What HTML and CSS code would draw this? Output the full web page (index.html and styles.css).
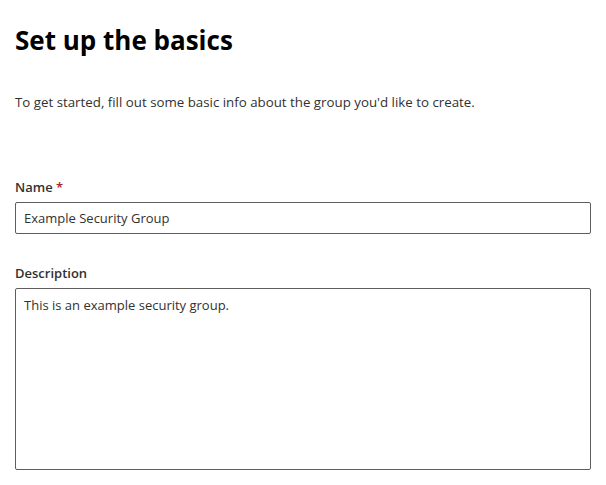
FILE: index.html
```html
<!DOCTYPE html>
<html lang="en">
<head>
    <meta charset="UTF-8">
    <meta name="viewport" content="width=device-width, initial-scale=1.0">
    <title>Set up the basics</title>
    <link rel="stylesheet" href="styles.css">
</head>
<body>
    <div class="page">
        <h1 class="title">Set up the basics</h1>
        <p class="intro">To get started, fill out some basic info about the group you'd like to create.</p>

        <div class="field">
            <label class="label" for="name">Name <span class="required">*</span></label>
            <input class="text-input" id="name" type="text" value="Example Security Group">
        </div>

        <div class="field">
            <label class="label" for="description">Description</label>
            <textarea class="text-area" id="description">This is an example security group.</textarea>
        </div>
    </div>
</body>
</html>
```

FILE: styles.css
```css
body {
    margin: 0;
    background: #ffffff;
    font-family: "Open Sans", "Noto Sans", sans-serif;
    color: #323130;
}
.page {
    padding: 22px 15px 0 15px;
}
.title {
    margin: 0;
    font-size: 26px;
    font-weight: 700;
    line-height: 36px;
    color: #000000;
}
.intro {
    margin: 34px 0 0 0;
    font-size: 13.3px;
    line-height: 20px;
}
.field {
    margin-top: 65px;
}
.field + .field {
    margin-top: 29px;
}
.label {
    display: block;
    font-size: 13px;
    font-weight: 600;
    line-height: 20px;
    padding-bottom: 5px;
}
.required {
    color: #a4262c;
}
.text-input,
.text-area {
    display: block;
    box-sizing: border-box;
    width: 576px;
    margin: 0;
    border: 1px solid #605e5c;
    border-radius: 2px;
    padding: 0 8px;
    font-family: inherit;
    font-size: 13px;
    color: #323130;
    background: #ffffff;
}
.text-input {
    height: 32px;
}
.text-area {
    height: 182px;
    padding-top: 7px;
    resize: none;
}
```
